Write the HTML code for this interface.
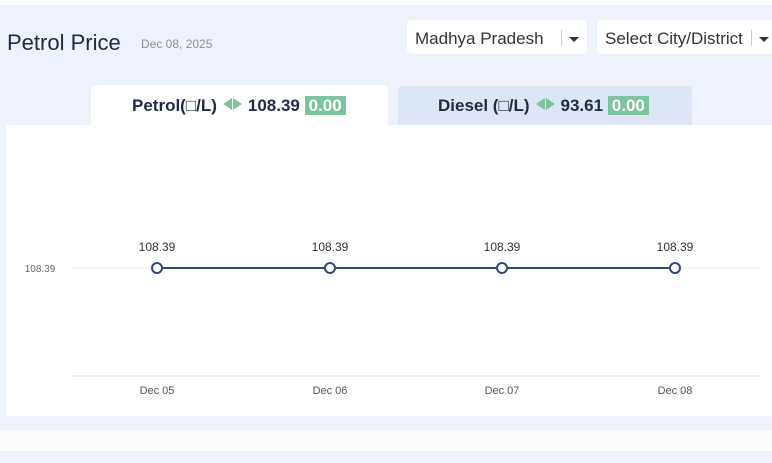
<!DOCTYPE html>
<html><head><style>
body{margin:0;width:772px;height:463px;overflow:hidden;background:#eef2fa;font-family:"Liberation Sans",sans-serif;position:relative}
.a{position:absolute}
.arr{display:inline-block;vertical-align:middle;margin:0 6px 3px 6px}
.l{display:inline-block;border-top:6px solid transparent;border-bottom:6px solid transparent;border-right:9px solid #7cc4a0}
.r{display:inline-block;border-top:6px solid transparent;border-bottom:6px solid transparent;border-left:9px solid #7cc4a0;margin-left:1px}
.b{background:#7cc4a0;color:#fff;padding:0 4px}
</style></head><body>
<div class="a" style="left:0;top:0;width:772px;height:5px;background:#fbfcfe"></div>
<div class="a" style="left:7px;top:30px;font-size:22px;color:#1d2b45">Petrol Price</div>
<div class="a" style="left:141px;top:37px;font-size:12px;color:#8a8f99">Dec 08, 2025</div>
<div class="a" style="left:407px;top:20px;width:180px;height:34px;background:#fff;border-radius:5px"></div>
<div class="a" style="left:415px;top:29px;font-size:17px;color:#333">Madhya Pradesh</div>
<div class="a" style="left:561px;top:30px;width:1px;height:16px;background:#ccc"></div>
<div class="a" style="left:569px;top:37px;border-left:5px solid transparent;border-right:5px solid transparent;border-top:5px solid #333"></div>
<div class="a" style="left:597px;top:20px;width:180px;height:34px;background:#fff;border-radius:5px"></div>
<div class="a" style="left:605px;top:29px;font-size:17px;color:#333">Select City/District</div>
<div class="a" style="left:751px;top:30px;width:1px;height:16px;background:#ccc"></div>
<div class="a" style="left:759px;top:37px;border-left:5px solid transparent;border-right:5px solid transparent;border-top:5px solid #333"></div>
<div class="a" style="left:91px;top:85px;width:297px;height:42px;background:#fff;border-radius:4px 4px 0 0"></div>
<div class="a" style="left:398px;top:86px;width:294px;height:40px;background:#dde6f5;border-radius:4px 4px 0 0"></div>
<div class="a" style="left:132px;top:95px;font-size:17px;font-weight:bold;color:#1d2b45;white-space:nowrap">Petrol(□/L)<span class="arr"><span class="l"></span><span class="r"></span></span>108.39 <span class="b">0.00</span></div>
<div class="a" style="left:438px;top:95px;font-size:17px;font-weight:bold;color:#1d2b45;white-space:nowrap">Diesel (□/L)<span class="arr"><span class="l"></span><span class="r"></span></span>93.61 <span class="b">0.00</span></div>
<div class="a" style="left:6px;top:125px;width:766px;height:291px;background:#fff"></div>
<div class="a" style="left:0;top:430px;width:772px;height:21px;background:#fbfcfe"></div>
<svg class="a" style="left:0;top:0" width="772" height="463">
<line x1="72" y1="268" x2="760" y2="268" stroke="#eee"/>
<line x1="72" y1="376" x2="760" y2="376" stroke="#ddd"/>
<line x1="157" y1="268" x2="675" y2="268" stroke="#2e4a7a" stroke-width="2"/>
<g fill="#fff" stroke="#2e4a7a" stroke-width="2">
<circle cx="157" cy="268" r="5"/><circle cx="330" cy="268" r="5"/><circle cx="502" cy="268" r="5"/><circle cx="675" cy="268" r="5"/></g>
<g font-family="Liberation Sans" font-size="12" fill="#333" text-anchor="middle">
<text x="157" y="251">108.39</text><text x="330" y="251">108.39</text><text x="502" y="251">108.39</text><text x="675" y="251">108.39</text>
<text x="40" y="272" font-size="10" fill="#666">108.39</text>
<g font-size="11" fill="#555"><text x="157" y="394">Dec 05</text><text x="330" y="394">Dec 06</text><text x="502" y="394">Dec 07</text><text x="675" y="394">Dec 08</text></g>
</g></svg>
</body></html>
